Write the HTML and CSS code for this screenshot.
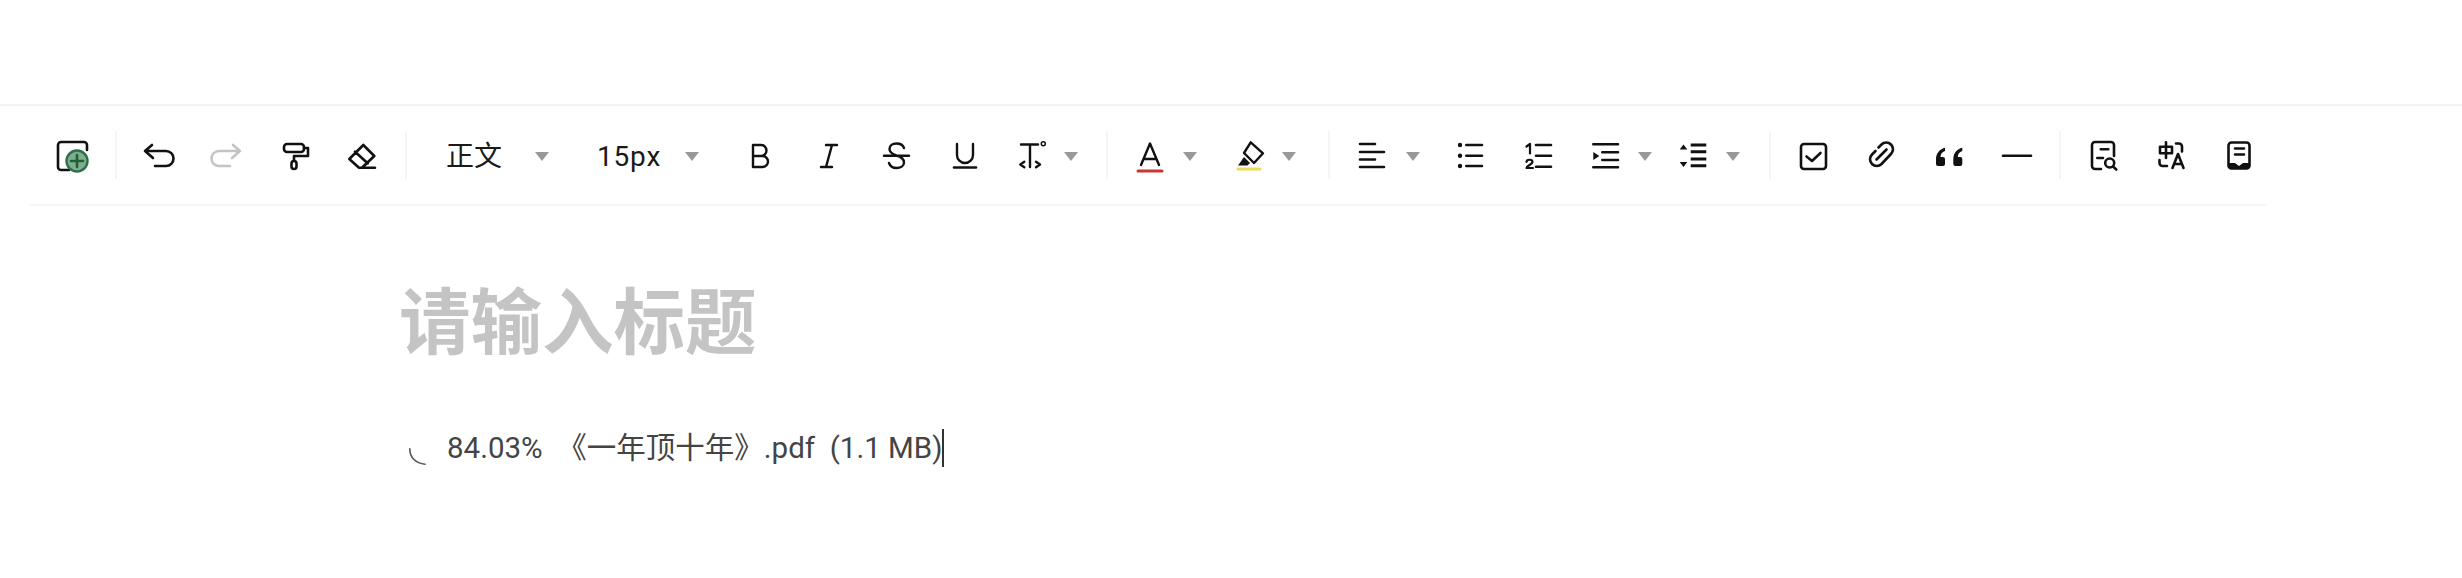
FILE: index.html
```html
<!DOCTYPE html>
<html lang="zh">
<head>
<meta charset="utf-8">
<title>编辑器</title>
<link rel="stylesheet" href="styles.css">
</head>
<body>
<div class="topbar"></div>
<div class="toolbar">
  <div class="tool"><svg class="ic" viewBox="0 0 36 36"><path class="s" d="M32 13V8a3 3 0 0 0-3-3H6a3 3 0 0 0-3 3v22a3 3 0 0 0 3 3h8"/><circle cx="22" cy="24" r="10.5" class="g"/><path class="p" d="M22 18v12M16 24h12"/></svg></div>
  <div class="sep"></div>
  <div class="tool"><svg class="ic" viewBox="0 0 36 36"><path class="s" d="M11 8l-7 6 8 7M4 14h21a7.500 7.500 0 0 1 0 15H14"/></svg></div>
  <div class="tool"><svg class="ic off" viewBox="0 0 36 36"><path class="s" d="M24 8l7 6-8 7M31 14H10a7.500 7.500 0 0 0 0 15h11"/></svg></div>
  <div class="tool"><svg class="ic" viewBox="0 0 36 36"><rect class="s" x="7" y="7" width="20" height="8" rx="3"/><path class="s" d="M27 11h4v8H17v5"/><rect class="s" x="14.500" y="24" width="5" height="8" rx="2.500"/></svg></div>
  <div class="tool"><svg class="ic" viewBox="0 0 36 36"><path class="s" d="M18.300 8L29.300 19 17 30.700h-3L4.300 22zM10 14.700l12.700 11.600M14 30.700h16"/></svg></div>
  <div class="sep"></div>
  <div class="select select-style"><span class="label">正文</span><i class="caret"></i></div>
  <div class="select select-size"><span class="label">15px</span><i class="caret"></i></div>
  <div class="tool"><svg class="ic" viewBox="0 0 36 36"><path class="t" d="M10 8h8a5.500 5.500 0 0 1 0 11h-8zM10 19h9.500a5.500 5.500 0 0 1 0 11H10z"/></svg></div>
  <div class="tool"><svg class="ic" viewBox="0 0 36 36"><path class="t" d="M15 8h11M10 30h11M21 8l-6 22"/></svg></div>
  <div class="tool"><svg class="ic" viewBox="0 0 36 36"><path class="t" d="M25 11c-1-3-4-4.500-7.500-4.500-4 0-7 2-7 5.500 0 3 2.500 5 7 6.500 5 1.500 7.500 3.500 7.500 7 0 3.500-3.500 5.500-7.500 5.500S11 29 10 26M5 18.700h25"/></svg></div>
  <div class="tool"><svg class="ic" viewBox="0 0 36 36"><path class="t" d="M10 7v11a8 8 0 0 0 16 0V7"/><path class="s" d="M7 30.500h22"/></svg></div>
  <div class="tool drop d-text"><svg class="ic" viewBox="0 0 36 36"><path class="t" d="M6 7.500h17M15 7.500V30M9.300 24.700l-4 2.800 4 2.800M21 24.700l4 2.800-4 2.800"/><circle class="thin" cx="28.300" cy="6.700" r="2"/></svg><i class="caret"></i></div>
  <div class="sep"></div>
  <div class="tool drop d-color"><svg class="ic" viewBox="0 0 36 36"><path class="t" d="M9 28l9-21.500L27 28M12 22h12"/><path class="red" d="M6 34h24"/></svg><i class="caret"></i></div>
  <div class="tool drop d-mark"><svg class="ic" viewBox="0 0 36 36"><path class="t" d="M17.700 5.300L30 16.300 21 26 11 16z"/><path class="f" d="M11 20l6 6-2.500 2.500H5z"/><path class="yel" d="M5 32h22"/></svg><i class="caret"></i></div>
  <div class="sep"></div>
  <div class="tool drop d-align"><svg class="ic" viewBox="0 0 36 36"><path class="s" d="M6 7h15M6 15h24M6 22.500h15M6 30h24"/></svg><i class="caret"></i></div>
  <div class="tool"><svg class="ic" viewBox="0 0 36 36"><circle class="f" cx="8" cy="8" r="2.200"/><circle class="f" cx="8" cy="18.700" r="2.200"/><circle class="f" cx="8" cy="29" r="2.200"/><path class="s" d="M14.300 8H30M14.300 18.700H30M14.300 29H30"/></svg></div>
  <div class="tool"><svg class="ic" viewBox="0 0 36 36"><path class="n" d="M6.500 9.500L10 7v9.500M6.500 25c0-3 6-3 6 0 0 2.500-6 3.500-6 6h6.500"/><path class="s" d="M16 8h15M16 18.700h15M16 29.700h15"/></svg></div>
  <div class="tool drop d-indent"><svg class="ic" viewBox="0 0 36 36"><path class="s" d="M5.300 7.300H30M14.300 15.300H30M14.300 23H30M5.300 30.300H30"/><path class="f" d="M5.300 15l6 4-6 4z"/></svg><i class="caret"></i></div>
  <div class="tool drop d-line"><svg class="ic" viewBox="0 0 36 36"><path class="s3" d="M15.700 8h15.600M15.700 14.700h15.600M15.700 22h15.600M15.700 28.700h15.600"/><path class="f" d="M8.500 7.500l3.800 5H4.700zM4.700 25h7.600l-3.800 5z"/></svg><i class="caret"></i></div>
  <div class="sep"></div>
  <div class="tool"><svg class="ic" viewBox="0 0 36 36"><rect class="s" x="6" y="7" width="25" height="25" rx="3"/><path class="s" d="M11.500 19.500L17 24l8.500-8"/></svg></div>
  <div class="tool"><svg class="ic" viewBox="0 0 36 36"><path class="s" d="M15.500 10.500l3-3a6.700 6.700 0 0 1 9.500 9.500l-9.500 10a6.700 6.700 0 0 1-9.500-9.500l3.500-3.500M13.500 22.500l10-10"/></svg></div>
  <div class="tool"><svg class="ic" viewBox="0 0 36 36"><path class="f" d="M14 10.700C9 12 5 16 5 22v5a2 2 0 0 0 2 2h5a2 2 0 0 0 2-2v-5a2 2 0 0 0-2-2H9.500c0-3 1.500-5 4.500-6zM31.300 10.700C26 12 22.300 16 22.300 22v5a2 2 0 0 0 2 2h5a2 2 0 0 0 2-2v-5a2 2 0 0 0-2-2h-2.500c0-3 1.500-5 4.500-6z"/></svg></div>
  <div class="tool"><svg class="ic" viewBox="0 0 36 36"><path class="s" d="M4 18.700h28"/></svg></div>
  <div class="sep"></div>
  <div class="tool"><svg class="ic" viewBox="0 0 36 36"><path class="s" d="M29 19V8a3 3 0 0 0-3-3H10a3 3 0 0 0-3 3v21a3 3 0 0 0 3 3h6M15.700 12.300h7.600M12.300 21H18"/><circle class="s" cx="24.700" cy="26" r="4.500"/><path class="s" d="M28 29.500l3.300 3"/></svg></div>
  <div class="tool"><svg class="ic" viewBox="0 0 36 36"><path class="s" d="M7 9.700h12v6.600H7zM13 5.300V21M23 6.500h3a3 3 0 0 1 3 3v5M6.500 23v3a3 3 0 0 0 3 3H14M19.500 31L25 17l5.500 14M21.300 27h7.400"/></svg></div>
  <div class="tool"><svg class="ic" viewBox="0 0 36 36"><rect class="s" x="7.500" y="5.500" width="21" height="26" rx="3"/><path class="s" d="M14 11.500h9M14 17.500h9"/><path class="f" d="M8 26h6l4 3 4-3h6v5H8z"/></svg></div>
</div>
<main class="editor">
  <h1 class="title">请输入标题</h1>
  <p class="upload"><svg class="spinner" viewBox="0 0 20 20"><path d="M2 1c0 9 6 16 17 17"/></svg><span class="filetext">84.03%  《一年顶十年》.pdf  (1.1 MB)</span></p>
</main>
</body>
</html>
```
FILE: styles.css
```css
* { box-sizing: border-box; }
html, body { margin: 0; padding: 0; background: #fff; }
body { font-family: Roboto, "Noto Sans CJK SC", sans-serif; color: #1a1a1a; overflow: hidden; }

.topbar { height: 106px; border-bottom: 2px solid #f4f4f4; }

.toolbar {
  display: flex;
  align-items: center;
  margin-left: 30px;
  width: 2236px;
  height: 100px;
  padding-left: 9px;
  border-bottom: 2px solid #f6f6f6;
}

.tool { display: flex; align-items: center; justify-content: center; flex: none; width: 68px; height: 48px; }
.ic { display: block; flex: none; width: 36px; height: 36px; color: #111; }
.ic.off { color: #c4c4c4; }

.s, .t, .n, .s3, .thin, .red, .yel, .g, .p { fill: none; stroke-linecap: round; stroke-linejoin: round; }
.s { stroke: currentColor; stroke-width: 2.6; }
.t { stroke: currentColor; stroke-width: 2.4; }
.n { stroke: currentColor; stroke-width: 2.2; }
.s3 { stroke: currentColor; stroke-width: 3; stroke-linecap: butt; }
.thin { stroke: currentColor; stroke-width: 1.5; }
.f { fill: currentColor; }
.red { stroke: #c9352f; stroke-width: 3; }
.yel { stroke: #efd95a; stroke-width: 3; }
.g { fill: #7fae8f; stroke: #2f6f49; stroke-width: 2.4; }
.p { stroke: #1f5f38; stroke-width: 2.6; }

.sep { flex: none; width: 2px; height: 48px; margin: 0 8px; background: #f5f5f5; }

.caret {
  display: block;
  flex: none;
  width: 0;
  height: 0;
  border-left: 7.5px solid transparent;
  border-right: 7.5px solid transparent;
  border-top: 9px solid #999;
  margin-top: 3px;
}

.select { display: flex; align-items: center; flex: none; height: 48px; }
.label { font-size: 28px; line-height: 40px; padding-top: 3px; color: #1a1a1a; white-space: nowrap; }
.select-style { width: 156px; padding-left: 31px; }
.select-style .caret { margin-left: 33px; }
.select-size { width: 156px; padding-left: 26px; }
.select-size .caret { margin-left: 24px; }
.select-size .label { letter-spacing: 0.8px; }

.drop { justify-content: flex-start; padding-left: 16px; }
.drop .caret { margin-left: 13px; }
.d-text { width: 99px; }
.d-color { width: 101px; }
.d-color .caret { margin-left: 15px; }
.d-mark { width: 103px; }
.d-align { width: 98px; padding-left: 16px; }
.d-align .caret { margin-left: 16px; }
.d-indent { width: 87px; }
.d-indent .caret { margin-left: 14px; }
.d-line { width: 102px; }
.d-line .caret { margin-left: 15px; }

.editor { padding: 68px 0 0 399px; }
.title { margin: 0; font-size: 71.5px; line-height: 100px; font-weight: 700; color: #c4c4c4; }
.upload { display: flex; align-items: center; margin: 54px 0 0; height: 40px; }
.spinner { flex: none; width: 18px; height: 18px; margin: 18px 21px 0 9px; fill: none; stroke: #555; stroke-width: 1.8; stroke-linecap: round; }
.filetext { font-size: 29.5px; line-height: 38px; color: #444; white-space: pre; border-right: 2px solid #333; }
```
